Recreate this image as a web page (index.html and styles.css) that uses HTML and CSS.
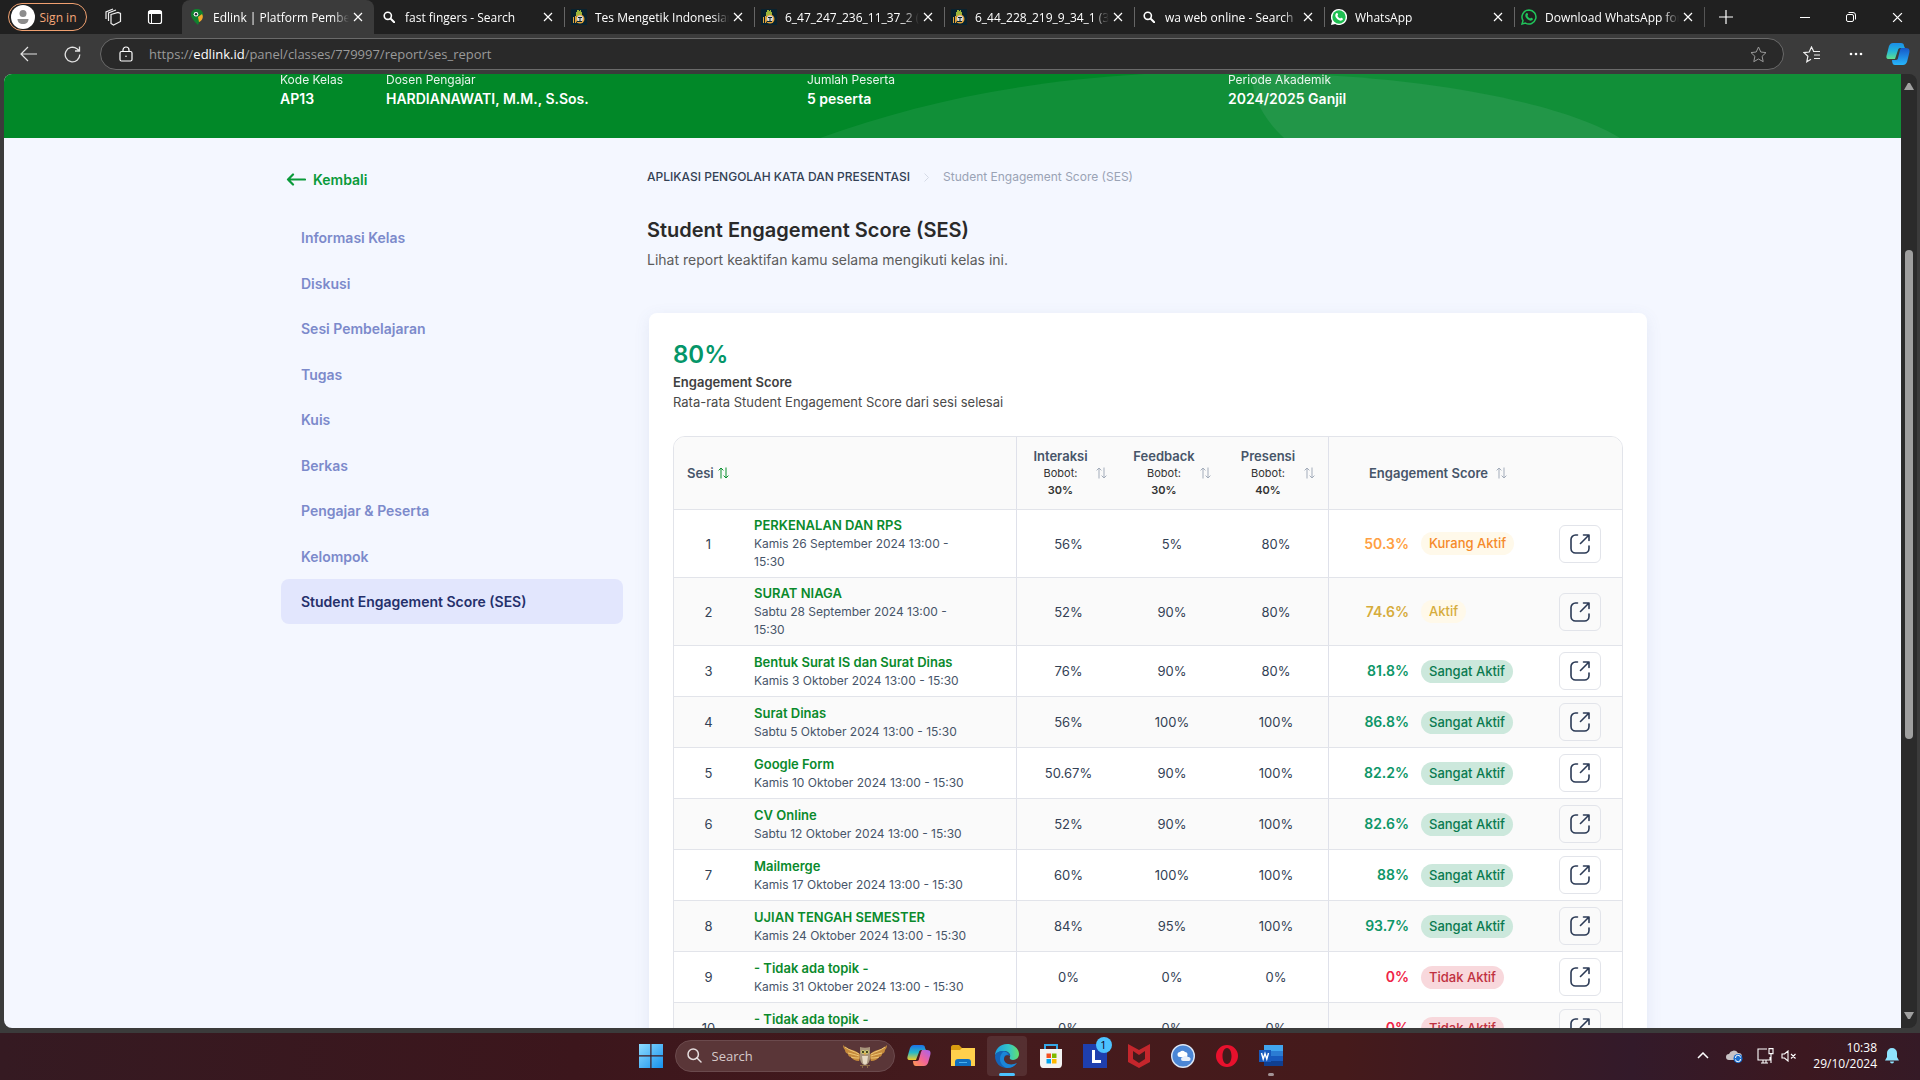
FILE: index.html
```html
<!DOCTYPE html>
<html lang="id">
<head>
<meta charset="utf-8">
<title>Edlink | Platform Pembelajaran</title>
<link rel="stylesheet" href="styles.css">
</head>
<body>
<svg class="defs" aria-hidden="true">
  <symbol id="x" viewBox="0 0 10 10"><path d="M1 1l8 8M9 1L1 9" fill="none" stroke="currentColor" stroke-width="1.2"/></symbol>
  <symbol id="lens" viewBox="0 0 12 12"><path d="M8 8l3.2 3.2" stroke="currentColor" stroke-width="2" stroke-linecap="round"/><circle cx="4.8" cy="4.8" r="3.6" fill="none" stroke="currentColor" stroke-width="1.6"/></symbol>
  <symbol id="typing" viewBox="0 0 16 16"><path fill="#08222f" d="M0 0h16v16H0z"/><path fill="#9bb63a" d="M5 5V3h1V1h2v1h1V1h1v2h1v4H5z"/><path fill="#e0a33b" d="M2 8h1v6H2zM4 7h1v7H4z"/><circle cx="9" cy="10" r="4.500" fill="#e0a33b"/><circle cx="9" cy="9.500" r="3" fill="#d7dcdf"/><path fill="#08222f" d="M7 8h4v1H7zM8.500 8h1v4h-1zM6 12h5v1H6z"/></symbol>
  <symbol id="sort" viewBox="0 0 11 12"><path d="M3 11.500V1M.6 3.400L3 1l2.400 2.400M8 .5V11M5.600 8.600L8 11l2.400-2.400" fill="none" stroke="currentColor"/></symbol>
  <symbol id="open" viewBox="0 0 20 20"><path d="M7.500 1H5.500A4.500 4.500 0 0 0 1 5.500v9A4.500 4.500 0 0 0 5.500 19h9a4.500 4.500 0 0 0 4.500-4.500V12M13.500 1H19v5.500M19 1l-8.500 8.500" fill="none" stroke="currentColor" stroke-width="1.600" stroke-linecap="round" stroke-linejoin="round"/></symbol>
  <symbol id="phone" viewBox="0 0 16 16"><path d="M5.300 4.200c.5-.5 1-.3 1.200.1l.6 1.300c.1.400-.7 1-.6 1.300.5 1.100 1.500 2 2.600 2.500.4.100.9-.9 1.300-.7l1.300.7c.6.400-.1 2-1.500 2.200C7.600 12 4 8.600 4.300 6c.1-.8.5-1.400 1-1.800z" fill="currentColor"/></symbol>
</svg>

<header class="tabstrip">
  <button class="signin"><svg width="24" height="24" viewBox="0 0 24 24"><circle cx="12" cy="12" r="12" fill="#fff"/><circle cx="12" cy="8.500" r="3.500" fill="#8c8c8c"/><path d="M6.500 14h11c0 3-2 5-5.500 5s-5.500-2-5.500-5z" fill="#8c8c8c"/></svg>Sign in</button>
  <button class="strip-btn" aria-label="Workspaces"><svg width="18" height="18" viewBox="0 0 18 18" fill="none" stroke="#eee" stroke-width="1.200"><path d="M7 6.500l7-2 2.500 1v8l-7 3.500-2.500-1.500zM4.500 13V5L12 2M2 11V4l7-3"/></svg></button>
  <button class="strip-btn" aria-label="Tab actions"><svg width="16" height="16" viewBox="0 0 16 16"><rect x="1.500" y="1.500" width="13" height="13" rx="2" fill="none" stroke="#fff" stroke-width="1.200"/><path d="M1.500 2h13v3h-13zM4 5h1v9H4z" fill="#fff"/></svg></button>
  <nav class="tabs">
    <div class="tab active"><svg width="16" height="16" viewBox="0 0 16 16"><path d="M8 0c4 0 6 2.600 6 5.500S10 13 9 16C5 12 2 9 2 5.500S4.500 0 8 0z" fill="#10802f"/><path d="M9 8l4-3c2 3 0 7-3 8z" fill="#f2a72b"/><circle cx="7" cy="5.200" r="2.300" fill="#fff"/><circle cx="7" cy="5.200" r="1.200" fill="#223"/></svg><span>Edlink | Platform Pembela</span><button aria-label="Close tab"><svg width="10" height="10"><use href="#x"/></svg></button></div>
    <div class="tab"><svg width="12" height="12" class="lens"><use href="#lens"/></svg><span>fast fingers - Search</span><button aria-label="Close tab"><svg width="10" height="10"><use href="#x"/></svg></button></div>
    <div class="tab"><svg width="16" height="16"><use href="#typing"/></svg><span>Tes Mengetik Indonesian</span><button aria-label="Close tab"><svg width="10" height="10"><use href="#x"/></svg></button></div>
    <div class="tab"><svg width="16" height="16"><use href="#typing"/></svg><span>6_47_247_236_11_37_2 (3</span><button aria-label="Close tab"><svg width="10" height="10"><use href="#x"/></svg></button></div>
    <div class="tab"><svg width="16" height="16"><use href="#typing"/></svg><span>6_44_228_219_9_34_1 (30</span><button aria-label="Close tab"><svg width="10" height="10"><use href="#x"/></svg></button></div>
    <div class="tab"><svg width="12" height="12" class="lens"><use href="#lens"/></svg><span>wa web online - Search</span><button aria-label="Close tab"><svg width="10" height="10"><use href="#x"/></svg></button></div>
    <div class="tab"><svg width="16" height="16" viewBox="0 0 16 16"><path d="M8 0a8 8 0 1 1-3.800 15L0 16l1-4A8 8 0 0 1 8 0z" fill="#fff"/><circle cx="8" cy="8" r="6.700" fill="#1fbf52"/><use href="#phone" color="#fff"/></svg><span>WhatsApp</span><button aria-label="Close tab"><svg width="10" height="10"><use href="#x"/></svg></button></div>
    <div class="tab"><svg width="16" height="16" viewBox="0 0 16 16"><path d="M8 1a7 7 0 1 1-3.500 13.100L1 15l1-3.400A7 7 0 0 1 8 1z" fill="none" stroke="#20c45a" stroke-width="1.500"/><use href="#phone" color="#20c45a"/></svg><span>Download WhatsApp for</span><button aria-label="Close tab"><svg width="10" height="10"><use href="#x"/></svg></button></div>
  </nav>
  <button class="newtab" aria-label="New tab"><svg width="14" height="14" viewBox="0 0 14 14" stroke="#fff" stroke-width="1.200"><path d="M7 0v14M0 7h14"/></svg></button>
  <div class="winctl">
    <button aria-label="Minimize"><svg width="10" height="10" viewBox="0 0 10 10" stroke="#fff"><path d="M0 5.500h10"/></svg></button>
    <button aria-label="Restore"><svg width="10" height="10" viewBox="0 0 10 10" fill="none" stroke="#fff"><rect x=".5" y="2.500" width="7" height="7" rx="1.500"/><path d="M2.500.5H7A2.500 2.500 0 0 1 9.500 3v4.500"/></svg></button>
    <button aria-label="Close"><svg width="11" height="11"><use href="#x"/></svg></button>
  </div>
</header>

<div class="toolbar">
  <button aria-label="Back"><svg width="17" height="16" viewBox="0 0 17 16" fill="none" stroke="#e4e4e4" stroke-width="1.200"><path d="M17 8H1M8 1L1 8l7 7"/></svg></button>
  <button aria-label="Reload"><svg width="17" height="17" viewBox="0 0 17 17" fill="none" stroke="#e4e4e4" stroke-width="1.300"><path d="M15.800 8.500A7.300 7.300 0 1 1 13 2.800L15.500 5M15.500.5V5H11"/></svg></button>
  <div class="address">
    <svg width="14" height="16" viewBox="0 0 14 16" fill="none" stroke="#fff" stroke-width="1.200"><rect x="1" y="5.500" width="12" height="9.500" rx="1.500"/><path d="M4 5.500V4a3 3 0 0 1 6 0v1.500"/><circle cx="7" cy="10.200" r=".8" fill="#fff" stroke="none"/></svg>
    <span class="url" role="textbox">https://<b>edlink.id</b>/panel/classes/779997/report/ses_report</span>
    <button aria-label="Favorite"><svg width="17" height="17" viewBox="0 0 17 17" fill="none" stroke="#9a9a9a"><path d="M8.500 1l2.300 5 5.200.6-3.900 3.700 1.100 5.400-4.700-2.700-4.700 2.700 1.100-5.400L1 6.600 6.200 6z"/></svg></button>
  </div>
  <button aria-label="Favorites"><svg width="18" height="17" viewBox="0 0 18 17" fill="none" stroke="#f0f0f0" stroke-width="1.200"><path d="M10.500 5L8.500 1 6.200 6 1 6.600l3.900 3.700-1.100 5.400L8 13.200M11 9h6M11 12.500h6M10 5.500h7"/></svg></button>
  <button aria-label="Settings"><svg width="14" height="4" viewBox="0 0 14 4" fill="#fff"><circle cx="2" cy="2" r="1.300"/><circle cx="7" cy="2" r="1.300"/><circle cx="12" cy="2" r="1.300"/></svg></button>
  <button aria-label="Copilot"><svg width="24" height="24" viewBox="0 0 24 24"><defs><linearGradient id="ca" x1="0" y1="0" x2="0" y2="1"><stop offset="0" stop-color="#1b8ee8"/><stop offset=".5" stop-color="#24b5d9"/><stop offset="1" stop-color="#5fe08e"/></linearGradient><linearGradient id="cb" x1="0" y1="0" x2="0" y2="1"><stop offset="0" stop-color="#1657c9"/><stop offset="1" stop-color="#27b7fb"/></linearGradient></defs><path d="M7 1h8c2 0 3 1 3 3l1 2h-5c-1 0-2 1-2 2l-3 9H3c-3 0-3-2-2-5l2-8c1-2 2-3 4-3z" fill="url(#ca)"/><path d="M15 6h5c4 0 4 3 3 6l-2 8c-1 2-2 3-4 3H9c-2 0-3-2-3-5h4c1 0 2-1 2-2l2-8z" fill="url(#cb)"/></svg></button>
</div>

<div class="browser">
  <div class="page">
    <section class="banner">
      <svg class="waves" viewBox="0 0 1897 64" preserveAspectRatio="none"><path d="M816 64C910 30 1010 8 1140 0H1897V64z" fill="#118f38"/><path d="M1249 0H1290C1430 4 1560 30 1616 64H1280C1258 44 1246 18 1249 0z" fill="#229648"/></svg>
      <dl class="info">
        <div><dt>Kode Kelas</dt><dd>AP13</dd></div>
        <div><dt>Dosen Pengajar</dt><dd>HARDIANAWATI, M.M., S.Sos.</dd></div>
        <div><dt>Jumlah Peserta</dt><dd>5 peserta</dd></div>
        <div><dt>Periode Akademik</dt><dd>2024/2025 Ganjil</dd></div>
      </dl>
    </section>
    <div class="layout">
      <aside class="side">
        <a class="back" href="#"><svg width="20" height="14" viewBox="0 0 20 14" fill="none" stroke="currentColor" stroke-width="2.200" stroke-linecap="round" stroke-linejoin="round"><path d="M19 6.500H2M7 1.500l-5 5 5 5"/></svg>Kembali</a>
        <nav class="menu">
          <a href="#">Informasi Kelas</a>
          <a href="#">Diskusi</a>
          <a href="#">Sesi Pembelajaran</a>
          <a href="#">Tugas</a>
          <a href="#">Kuis</a>
          <a href="#">Berkas</a>
          <a href="#">Pengajar &amp; Peserta</a>
          <a href="#">Kelompok</a>
          <a href="#" class="current">Student Engagement Score (SES)</a>
        </nav>
      </aside>
      <main class="main">
        <nav class="crumbs"><a href="#">APLIKASI PENGOLAH KATA DAN PRESENTASI</a><svg width="5" height="9" viewBox="0 0 5 9" fill="none" stroke="#d5dae6"><path d="M.5.5l4 4-4 4"/></svg><span>Student Engagement Score (SES)</span></nav>
        <h1>Student Engagement Score (SES)</h1>
        <p class="lead">Lihat report keaktifan kamu selama mengikuti kelas ini.</p>
        <section class="card">
          <div class="total">80%</div>
          <h2>Engagement Score</h2>
          <p class="note">Rata-rata Student Engagement Score dari sesi selesai</p>
          <div class="frame">
          <table>
            <colgroup><col class="c-no"><col class="c-title"><col class="c-val"><col class="c-val"><col class="c-val"><col></colgroup>
            <thead><tr>
              <th colspan="2"><button class="sorter on">Sesi<svg width="11" height="12"><use href="#sort"/></svg></button></th>
              <th class="rule"><button class="weight"><span>Interaksi<small>Bobot:</small><small><b>30%</b></small></span><svg width="11" height="12"><use href="#sort"/></svg></button></th>
              <th><button class="weight"><span>Feedback<small>Bobot:</small><small><b>30%</b></small></span><svg width="11" height="12"><use href="#sort"/></svg></button></th>
              <th><button class="weight"><span>Presensi<small>Bobot:</small><small><b>40%</b></small></span><svg width="11" height="12"><use href="#sort"/></svg></button></th>
              <th class="rule"><button class="sorter score-head">Engagement Score<svg width="11" height="12"><use href="#sort"/></svg></button></th>
            </tr></thead>
            <tbody>
              <tr><td>1</td><td class="session"><a href="#">PERKENALAN DAN RPS</a><time>Kamis 26 September 2024 13:00 - 15:30</time></td><td class="rule">56%</td><td>5%</td><td>80%</td><td class="rule"><div class="score low"><b>50.3%</b><span>Kurang Aktif</span><button aria-label="Buka"><svg width="20" height="20"><use href="#open"/></svg></button></div></td></tr>
              <tr><td>2</td><td class="session"><a href="#">SURAT NIAGA</a><time>Sabtu 28 September 2024 13:00 - 15:30</time></td><td class="rule">52%</td><td>90%</td><td>80%</td><td class="rule"><div class="score mid"><b>74.6%</b><span>Aktif</span><button aria-label="Buka"><svg width="20" height="20"><use href="#open"/></svg></button></div></td></tr>
              <tr><td>3</td><td class="session"><a href="#">Bentuk Surat IS dan Surat Dinas</a><time>Kamis 3 Oktober 2024 13:00 - 15:30</time></td><td class="rule">76%</td><td>90%</td><td>80%</td><td class="rule"><div class="score high"><b>81.8%</b><span>Sangat Aktif</span><button aria-label="Buka"><svg width="20" height="20"><use href="#open"/></svg></button></div></td></tr>
              <tr><td>4</td><td class="session"><a href="#">Surat Dinas</a><time>Sabtu 5 Oktober 2024 13:00 - 15:30</time></td><td class="rule">56%</td><td>100%</td><td>100%</td><td class="rule"><div class="score high"><b>86.8%</b><span>Sangat Aktif</span><button aria-label="Buka"><svg width="20" height="20"><use href="#open"/></svg></button></div></td></tr>
              <tr><td>5</td><td class="session"><a href="#">Google Form</a><time>Kamis 10 Oktober 2024 13:00 - 15:30</time></td><td class="rule">50.67%</td><td>90%</td><td>100%</td><td class="rule"><div class="score high"><b>82.2%</b><span>Sangat Aktif</span><button aria-label="Buka"><svg width="20" height="20"><use href="#open"/></svg></button></div></td></tr>
              <tr><td>6</td><td class="session"><a href="#">CV Online</a><time>Sabtu 12 Oktober 2024 13:00 - 15:30</time></td><td class="rule">52%</td><td>90%</td><td>100%</td><td class="rule"><div class="score high"><b>82.6%</b><span>Sangat Aktif</span><button aria-label="Buka"><svg width="20" height="20"><use href="#open"/></svg></button></div></td></tr>
              <tr><td>7</td><td class="session"><a href="#">Mailmerge</a><time>Kamis 17 Oktober 2024 13:00 - 15:30</time></td><td class="rule">60%</td><td>100%</td><td>100%</td><td class="rule"><div class="score high"><b>88%</b><span>Sangat Aktif</span><button aria-label="Buka"><svg width="20" height="20"><use href="#open"/></svg></button></div></td></tr>
              <tr><td>8</td><td class="session"><a href="#">UJIAN TENGAH SEMESTER</a><time>Kamis 24 Oktober 2024 13:00 - 15:30</time></td><td class="rule">84%</td><td>95%</td><td>100%</td><td class="rule"><div class="score high"><b>93.7%</b><span>Sangat Aktif</span><button aria-label="Buka"><svg width="20" height="20"><use href="#open"/></svg></button></div></td></tr>
              <tr><td>9</td><td class="session"><a href="#">- Tidak ada topik -</a><time>Kamis 31 Oktober 2024 13:00 - 15:30</time></td><td class="rule">0%</td><td>0%</td><td>0%</td><td class="rule"><div class="score none"><b>0%</b><span>Tidak Aktif</span><button aria-label="Buka"><svg width="20" height="20"><use href="#open"/></svg></button></div></td></tr>
              <tr><td>10</td><td class="session"><a href="#">- Tidak ada topik -</a><time></time></td><td class="rule">0%</td><td>0%</td><td>0%</td><td class="rule"><div class="score none"><b>0%</b><span>Tidak Aktif</span><button aria-label="Buka"><svg width="20" height="20"><use href="#open"/></svg></button></div></td></tr>
            </tbody>
          </table>
          </div>
        </section>
      </main>
    </div>
  </div>
  <div class="scrollbar"><svg width="10" height="8" viewBox="0 0 10 8"><path d="M4 1h2l4 7H0z" fill="#a0a0a0"/></svg><div class="track"><i></i></div><svg width="10" height="8" viewBox="0 0 10 8"><path d="M0 0h10L6 7H4z" fill="#a0a0a0"/></svg></div>
</div>

<footer class="taskbar">
  <div class="apps">
    <button class="app" aria-label="Start"><svg width="24" height="24" viewBox="0 0 24 24"><defs><linearGradient id="wg" x1="0" y1="0" x2="1" y2="1"><stop offset="0" stop-color="#8fdcff"/><stop offset="1" stop-color="#1591ee"/></linearGradient></defs><path d="M0 0h11.300v11.300H0zM12.500 0H24v11.300H12.500zM0 12.500h11.300V24H0zM12.500 12.500H24V24H12.500z" fill="url(#wg)"/></svg></button>
    <label class="search"><svg width="15" height="15" viewBox="0 0 15 15" fill="none" stroke="#e6dedf" stroke-width="1.500" stroke-linecap="round"><circle cx="6.200" cy="6.200" r="5.200"/><path d="M10 10l4 4"/></svg><input type="text" placeholder="Search" aria-label="Search">
      <svg width="44" height="24" viewBox="0 0 44 24"><path d="M0 1c4 5 9 4 14 7l4 3-2 6c-4 0-7-2-8-4-2 0-3-2-3-3C3 9 2 8 2 6 1 5 0 3 0 1z" fill="#c58a3b"/><path d="M44 1c-4 5-9 4-14 7l-4 3 2 6c4 0 7-2 8-4 2 0 3-2 3-3 2-1 3-2 3-4 1-1 2-3 2-5z" fill="#c58a3b"/><path d="M2 3c5 4 9 4 14 7M5 9c4 1 8 2 11 3M8 13c3 1 5 1 8 1M42 3c-5 4-9 4-14 7M39 9c-4 1-8 2-11 3M36 13c-3 1-5 1-8 1" stroke="#f0c979" fill="none"/><path d="M17 3c3 1 7 1 10 0v6c1 6-1 12-5 12s-6-6-5-12z" fill="#a8947c"/><path d="M19 12h6l-1 7c-1 2-3 2-4 0z" fill="#e6d9c3"/><circle cx="20" cy="8" r="1.800" fill="#dfe36a"/><circle cx="24" cy="8" r="1.800" fill="#dfe36a"/><circle cx="20" cy="8" r=".9"/><circle cx="24" cy="8" r=".9"/><path d="M21 9h2l-1 3z" fill="#e9a93b"/><path d="M17 21h10v1H17zM19 22h1v2h-1zM24 22h1v2h-1z" fill="#8d6b45"/></svg></label>
    <button class="app" aria-label="Copilot"><svg width="24" height="24" viewBox="0 0 24 24"><defs><linearGradient id="cc" x1="0" y1="0" x2="0" y2="1"><stop offset="0" stop-color="#1d72e8"/><stop offset=".5" stop-color="#26b8c9"/><stop offset="1" stop-color="#f3cc28"/></linearGradient><linearGradient id="cd" x1="1" y1="0" x2="0" y2="1"><stop offset="0" stop-color="#a463f0"/><stop offset=".5" stop-color="#f0639b"/><stop offset="1" stop-color="#ff9a4a"/></linearGradient></defs><path d="M7 1h8c2 0 3 1 3 3l1 2h-5c-1 0-2 1-2 2l-3 8H3c-3 0-3-2-2-5l2-7c1-2 2-3 4-3z" fill="url(#cc)"/><path d="M15 6h5c4 0 4 3 3 6l-2 7c-1 2-2 3-4 3H9c-2 0-3-2-3-5h4c1 0 2-1 2-2l2-7z" fill="url(#cd)"/></svg></button>
    <button class="app" aria-label="File Explorer"><svg width="24" height="24" viewBox="0 0 24 24"><path d="M0 3c0-1 1-2 2-2h6l3 3h11c1 0 2 1 2 2v4H0z" fill="#d99b10"/><path d="M0 6h9l2-2h13v18H0z" fill="#ffd04c"/><path d="M4 22v-4c0-2 1-3 3-3h10c2 0 3 1 3 3v4z" fill="#0f6fc0"/><path d="M8 18h8v1H8z" fill="#4ab0f0"/></svg></button>
    <button class="app live" aria-label="Edge"><svg width="26" height="26" viewBox="0 0 26 26"><defs><linearGradient id="ea" x1="0" y1="0" x2="1" y2="0"><stop offset="0" stop-color="#1b9de2"/><stop offset=".6" stop-color="#35c7c3"/><stop offset="1" stop-color="#66e06a"/></linearGradient></defs><path d="M1 13C1 6 6 1 13 1s12 5 12 10c0 4-3 6-6 6-2 0-4-1-3-3 1-3-2-6-6-6-5 0-9 3-9 5z" fill="url(#ea)"/><path d="M1 13c1-4 5-5 8-5 4 0 7 2 7 5-3-2-6 0-6 3 0 4 4 6 8 6 2 0 4-1 5-2-2 3-6 5-10 5C6 25 1 20 1 13z" fill="#1464b8"/><path d="M9 9c-2 2-3 4-3 7 0 4 3 8 7 9 4 0 8-2 10-5-6 3-14 1-13-5 0-2 2-4 4-3 0-2-2-4-5-3z" fill="#1b86d8"/></svg></button>
    <button class="app" aria-label="Store"><svg width="24" height="24" viewBox="0 0 24 24"><path d="M6 6V1h12v5" fill="none" stroke="#35a8e8" stroke-width="2"/><path d="M1 5h22v15c0 2-1 4-3 4H4c-2 0-3-2-3-4z" fill="#f3f3f3"/><path fill="#f25022" d="M7.500 9.500H12V14H7.500z"/><path fill="#7fba00" d="M13 9.500h4.500V14H13z"/><path fill="#00a4ef" d="M7.500 15H12v4.500H7.500z"/><path fill="#ffb900" d="M13 15h4.500v4.500H13z"/></svg></button>
    <button class="app" aria-label="L"><svg width="24" height="24" viewBox="0 0 24 24"><path fill="#1e3fae" d="M0 0h24v24H0z"/><path fill="#fff" d="M9 6h3v10h6v3H9z"/></svg><span class="badge">1</span></button>
    <button class="app" aria-label="McAfee"><svg width="22" height="24" viewBox="0 0 22 24"><path d="M0 0l11 6L22 0v18l-11 6-11-6zM5 7v8l6 4 6-4V7l-6 4z" fill="#c4262c" fill-rule="evenodd"/></svg></button>
    <button class="app" aria-label="Cloud"><svg width="24" height="24" viewBox="0 0 24 24"><circle cx="12" cy="12" r="11.300" fill="#4b86d6" stroke="#dce6f5" stroke-width="1.400"/><path d="M9 13a2.500 2.500 0 0 1 0-5 3 3 0 0 1 5 0 2.500 2.500 0 0 1 0 5z" fill="#fff"/><path d="M12 17a2 2 0 0 1 0-4 3 3 0 0 1 5 0 2 2 0 0 1 1 4z" fill="#e7effb"/></svg></button>
    <button class="app" aria-label="Opera"><svg width="24" height="24" viewBox="0 0 24 24"><path d="M12 1a11 11 0 1 0 0 22 11 11 0 0 0 0-22zm0 3c3 0 4.500 4 4.500 8S15 20 12 20s-4.500-4-4.500-8S9 4 12 4z" fill="#e8112d" fill-rule="evenodd"/></svg></button>
    <button class="app idle" aria-label="Word"><svg width="24" height="24" viewBox="0 0 24 24"><path fill="#41a5ee" d="M5 1h19v6H5z"/><path fill="#2b7cd3" d="M5 7h19v5H5z"/><path fill="#185abd" d="M5 12h19v5H5z"/><path fill="#103f91" d="M5 17h19v5H5z"/><path fill="#185abd" d="M0 6h12v12H0z"/><path d="M2.500 9l1.700 6L6 9.500 7.800 15l1.700-6" fill="none" stroke="#fff" stroke-width="1.400"/></svg></button>
  </div>
  <div class="tray">
    <svg class="more" width="12" height="7" viewBox="0 0 12 7" fill="none" stroke="#fff" stroke-width="1.500"><path d="M1 6l5-5 5 5"/></svg>
    <svg width="17" height="14" viewBox="0 0 17 14"><path d="M3 11a3 3 0 0 1 0-6 5 5 0 0 1 9-1 3 3 0 0 1 1 7z" fill="#c9c3c6"/><circle cx="12" cy="9.500" r="4.500" fill="#1c6fd0"/><path d="M9.500 9a2.500 2.500 0 0 1 5-.5M14.500 10a2.500 2.500 0 0 1-5 .5" stroke="#fff" fill="none"/></svg>
    <svg width="17" height="16" viewBox="0 0 17 16" fill="none" stroke="#fff" stroke-width="1.100"><path d="M10 1H1v11h12V9M4 15h7M6 12v3M9 12v3M12 .6h4v5h-4zM14 5.500V15"/></svg>
    <svg class="sound" width="16" height="12" viewBox="0 0 16 12" fill="none" stroke="#fff" stroke-width="1.100"><path d="M1 4h2.500L7 1v10L3.500 8H1zM10 4l4.500 4.500M14.500 4L10 8.500"/></svg>
    <div class="clock"><span>10:38</span><span>29/10/2024</span></div>
    <svg width="14" height="16" viewBox="0 0 14 16"><path d="M7 0a5 5 0 0 1 5 5v4l2 3.500H0L2 9V5a5 5 0 0 1 5-5zM5 13.500h4a2 2 0 0 1-4 0z" fill="#8fe4ff"/></svg>
  </div>
</footer>
</body>
</html>
```
FILE: styles.css
```css
* { box-sizing: border-box; }
body { margin: 0; height: 100vh; display: flex; flex-direction: column; overflow: hidden; background: #3b3b3b; font-family: Inter, sans-serif; }
button { background: none; border: 0; padding: 0; font: inherit; color: inherit; display: flex; align-items: center; justify-content: center; }
a { text-decoration: none; color: inherit; }
h1, h2, p, dl, dd { margin: 0; }
svg { flex: none; }
.defs { display: none; }

/* Browser chrome */
.tabstrip, .toolbar, .taskbar { font-family: "Open Sans", "Noto Sans", sans-serif; }
.tabstrip { height: 34px; flex: none; display: flex; background: #202020; color: #fff; font-size: 12px; }
.signin { align-self: center; margin-left: 8px; width: 79px; height: 28px; gap: 5px; padding-right: 8px; border: 1px solid #f0a070; border-radius: 14px; color: #f5a778; white-space: nowrap; }
.strip-btn { width: 42px; }
.signin + .strip-btn { margin-left: 5px; }
.tabs { display: flex; margin-left: 6px; }
.tab { width: 190px; display: flex; align-items: center; padding: 0 11px 0 7px; position: relative; }
.tab:not(.active) + .tab::before { content: ""; position: absolute; left: 0; top: 7px; height: 20px; width: 1px; background: #666; }
.tab > svg { width: 16px; }
.tab > .lens { padding: 0 2px; }
.tab > span { flex: 1; margin-left: 8px; white-space: nowrap; overflow: hidden; -webkit-mask-image: linear-gradient(to right, #000 88%, transparent); mask-image: linear-gradient(to right, #000 88%, transparent); }
.tab > button { width: 10px; margin-left: 4px; }
.tab.active { width: 192px; background: #3b3b3b; border-radius: 8px 8px 0 0; }
.newtab { width: 42px; border-left: 1px solid #555; margin: 7px 0; }
.winctl { margin-left: auto; display: flex; }
.winctl button { width: 46px; }
.toolbar { height: 40px; flex: none; display: flex; align-items: center; padding: 0 2px 0 6px; color: #9a9a9a; font-size: 13px; }
.toolbar > button { width: 44px; height: 32px; }
.toolbar > button:last-child { width: 40px; }
.address { flex: 1; display: flex; align-items: center; height: 32px; margin: 0 6px; padding: 0 16px 0 18px; border: 1px solid #6a6a6a; border-radius: 16px; background: #292929; }
.url { flex: 1; margin-left: 16px; }
.url b { color: #fff; font-weight: 400; }

/* Page viewport */
.browser { flex: 1; min-height: 0; display: flex; margin: 0 3px 5px 4px; border-radius: 8px; overflow: hidden; }
.page { flex: 1; overflow: hidden; background: #f4f7ff; }
.scrollbar { width: 16px; background: #2b2b2b; display: flex; flex-direction: column; align-items: center; padding: 8px 0; }
.track { flex: 1; width: 8px; padding: 160px 0 273px; }
.track i { display: block; height: 100%; border-radius: 4px; background: #9f9f9f; }
.banner { position: relative; height: 64px; background: #018828; color: #fff; }
.waves { position: absolute; inset: 0; width: 100%; height: 100%; }
.info { position: relative; max-width: 1389px; margin: 0 auto; padding-left: 22px; display: grid; grid-template-columns: 106px 421px 421px 1fr; }
.info dt { font-size: 12px; line-height: 12px; opacity: .9; }
.info dd { font-size: 14px; line-height: 20px; font-weight: 600; margin-top: 3px; }
.layout { max-width: 1389px; margin: 0 auto; padding-left: 22px; display: grid; grid-template-columns: 343px minmax(0, 1fr); gap: 24px; }

/* Sidebar */
.back { display: flex; align-items: center; gap: 7px; margin: 30px 0 35px 6px; font-size: 14px; line-height: 24px; font-weight: 600; color: #0a9a3a; }
.menu { display: flex; flex-direction: column; justify-content: space-between; min-height: 409px; padding-left: 1px; margin-top: -12px; font-size: 14px; line-height: 21px; font-weight: 600; color: #7c8acb; }
.menu a { padding: 12px 20px; border-radius: 8px; }
.menu .current { background: #e2e6fd; color: #25306b; }

/* Main column */
.crumbs { display: flex; align-items: center; gap: 14px; margin-top: 29px; font-size: 12px; line-height: 20px; color: #9aa3b5; }
.crumbs a { color: #334155; font-weight: 500; }
h1 { margin-top: 27px; font-size: 20px; line-height: 32px; font-weight: 600; color: #2a2a2a; }
.lead { margin-top: 4px; font-size: 14px; line-height: 20px; color: #5c5c5c; }
.card { margin: 43px 0 0 2px; padding: 24px; background: #fff; border-radius: 8px; box-shadow: 0 4px 16px rgba(80, 100, 160, .1); }
.total { font-size: 24px; line-height: 35px; font-weight: 600; color: #059669; }
h2 { font-size: 13px; line-height: 20px; font-weight: 600; color: #404040; }
.note { font-size: 13px; line-height: 20px; color: #4a4a4a; }
.frame { margin-top: 24px; border: 1px solid #e2e4ea; border-radius: 12px; overflow: hidden; }
table { width: 100%; table-layout: fixed; border-spacing: 0; font-size: 13px; line-height: 18px; color: #334155; text-align: center; }
.c-no { width: 69px; }
.c-title { width: 273px; }
.c-val { width: 104px; }
th, td { padding: 0; border-bottom: 1px solid #e2e4ea; }
.rule { border-left: 1px solid #dfe1ea; }
th { height: 73px; font-weight: 600; color: #475569; background: #fafafa; }
th button { width: 100%; color: inherit; }
th svg { color: #a3acba; }
.sorter { justify-content: flex-start; padding-left: 13px; gap: 4px; }
.on svg { color: #0a8f2f; }
.score-head { padding-left: 40px; gap: 8px; }
.weight { padding: 0 13px 0 8px; }
.weight > span { flex: 1; }
.weight small { display: block; font-size: 11px; line-height: 17px; font-weight: 400; color: #333; }
.weight b { font-weight: 600; }
td { padding: 6px 0; }
tr:nth-child(even) td { background: #fafafa; }
.session { padding: 6px 41px 6px 11px; text-align: left; }
.session a { display: block; line-height: 19px; font-weight: 600; color: #0a8a2c; }
.session time { display: block; min-height: 18px; font-size: 12px; line-height: 18px; color: #475569; }
.score { display: flex; align-items: center; padding-right: 21px; }
.score b { width: 80px; text-align: right; font-size: 14px; font-weight: 600; }
.score span { margin-left: 12px; padding: 0 8px; line-height: 23px; border-radius: 12px; font-weight: 500; }
.score button { width: 42px; height: 38px; margin-left: auto; border: 1px solid #e2e4ea; border-radius: 6px; color: #2b3a55; }
.low b { color: #ff9f43; }
.low span { background: #fff9ea; color: #f58a2a; }
.mid b { color: #d6ac3c; }
.mid span { background: #fff9ea; color: #d6ac3c; }
.high b { color: #0d9668; }
.high span { background: #cce8dc; color: #0a7a50; }
.none b { color: #ef2346; }
.none span { background: #f8d8dc; color: #c03040; }

/* Taskbar */
.taskbar { height: 47px; flex: none; padding-bottom: 2px; display: grid; grid-template-columns: 1fr auto 1fr; background: linear-gradient(90deg, #351a22, #3c161c 30%, #451b1d 52%, #451a1b 70%, #331a2a 85%, #3c1820 94%, #351a26); color: #fff; }
.apps { grid-column: 2; display: flex; align-items: center; margin-left: 1px; }
.app { width: 44px; height: 40px; position: relative; }
.badge { position: absolute; right: 5px; top: 1px; width: 16px; height: 16px; border-radius: 50%; background: #4cc2ff; color: #102; font-size: 11px; line-height: 16px; text-align: center; }
.live { width: 40px; margin: 0 2px; border-radius: 4px; background: rgba(255, 255, 255, .09); }
.live::after, .idle::after { content: ""; position: absolute; bottom: 0; width: 16px; height: 3px; border-radius: 2px; background: #4cc2ff; }
.idle::after { width: 6px; background: #a39496; }
.search { width: 220px; height: 32px; margin: 0 2px; padding: 0 7px 0 11px; display: flex; align-items: center; border: 1px solid #6b4a4d; border-radius: 16px; background: #5a3638; }
.search input { flex: 1; min-width: 0; margin-left: 10px; padding: 0; border: 0; background: none; color: #fff; font: 13px "Open Sans", "Noto Sans", sans-serif; }
.search input::placeholder { color: #d6c9ca; opacity: 1; }
.tray { display: flex; align-items: center; justify-content: flex-end; gap: 14px; padding-right: 21px; }
.more { margin-right: 3px; }
.sound { margin-left: -7px; }
.clock { display: flex; flex-direction: column; text-align: right; font-size: 12px; line-height: 16px; margin-left: 2px; }
.clock + svg { margin-left: -6px; }
```
